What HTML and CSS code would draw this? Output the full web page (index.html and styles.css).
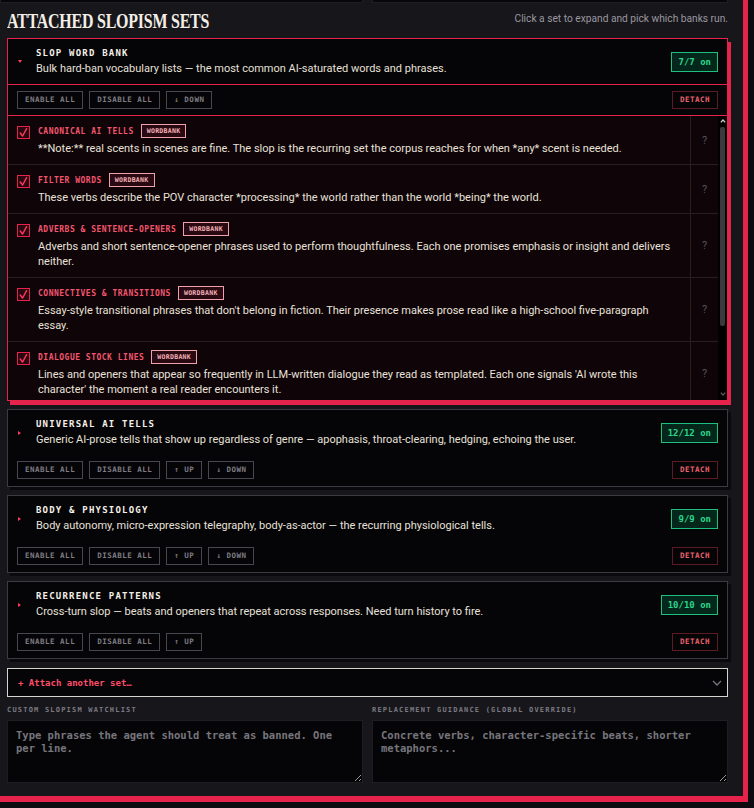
FILE: index.html
```html
<!DOCTYPE html>
<html lang="en">
<head>
<meta charset="utf-8">
<title>Attached Slopism Sets</title>
<link rel="stylesheet" href="styles.css">
</head>
<body>
<section class="panel">
  <div class="prev-fields">
    <div class="prev-box"></div>
    <div class="prev-box"></div>
  </div>

  <header class="section-head">
    <h2 class="section-title">Attached Slopism Sets</h2>
    <p class="section-hint">Click a set to expand and pick which banks run.</p>
  </header>

  <div class="set set-open">
    <div class="set-head">
      <span class="caret caret-down"></span>
      <div class="set-info">
        <div class="set-name">SLOP WORD BANK</div>
        <div class="set-desc">Bulk hard-ban vocabulary lists — the most common AI-saturated words and phrases.</div>
      </div>
      <span class="count">7/7 on</span>
    </div>
    <div class="set-tools">
      <div class="tool-group">
        <button class="tool">ENABLE ALL</button>
        <button class="tool">DISABLE ALL</button>
        <button class="tool">↓ DOWN</button>
      </div>
      <button class="tool detach">DETACH</button>
    </div>
    <div class="banks">
      <div class="bank-list">
        <div class="bank">
          <div class="bank-main">
            <span class="check"><svg viewBox="0 0 13 13" width="13" height="13"><polyline points="3.2,7 5.6,10 9.6,2.6" /></svg></span>
            <div class="bank-body">
              <div class="bank-title"><span class="bank-name">CANONICAL AI TELLS</span><span class="tag">WORDBANK</span></div>
              <div class="bank-desc">**Note:** real scents in scenes are fine. The slop is the recurring set the corpus reaches for when *any* scent is needed.</div>
            </div>
          </div>
          <span class="bank-help">?</span>
        </div>
        <div class="bank">
          <div class="bank-main">
            <span class="check"><svg viewBox="0 0 13 13" width="13" height="13"><polyline points="3.2,7 5.6,10 9.6,2.6" /></svg></span>
            <div class="bank-body">
              <div class="bank-title"><span class="bank-name">FILTER WORDS</span><span class="tag">WORDBANK</span></div>
              <div class="bank-desc">These verbs describe the POV character *processing* the world rather than the world *being* the world.</div>
            </div>
          </div>
          <span class="bank-help">?</span>
        </div>
        <div class="bank">
          <div class="bank-main">
            <span class="check"><svg viewBox="0 0 13 13" width="13" height="13"><polyline points="3.2,7 5.6,10 9.6,2.6" /></svg></span>
            <div class="bank-body">
              <div class="bank-title"><span class="bank-name">ADVERBS &amp; SENTENCE-OPENERS</span><span class="tag">WORDBANK</span></div>
              <div class="bank-desc">Adverbs and short sentence-opener phrases used to perform thoughtfulness. Each one promises emphasis or insight and delivers neither.</div>
            </div>
          </div>
          <span class="bank-help">?</span>
        </div>
        <div class="bank">
          <div class="bank-main">
            <span class="check"><svg viewBox="0 0 13 13" width="13" height="13"><polyline points="3.2,7 5.6,10 9.6,2.6" /></svg></span>
            <div class="bank-body">
              <div class="bank-title"><span class="bank-name">CONNECTIVES &amp; TRANSITIONS</span><span class="tag">WORDBANK</span></div>
              <div class="bank-desc">Essay-style transitional phrases that don't belong in fiction. Their presence makes prose read like a high-school five-paragraph essay.</div>
            </div>
          </div>
          <span class="bank-help">?</span>
        </div>
        <div class="bank">
          <div class="bank-main">
            <span class="check"><svg viewBox="0 0 13 13" width="13" height="13"><polyline points="3.2,7 5.6,10 9.6,2.6" /></svg></span>
            <div class="bank-body">
              <div class="bank-title"><span class="bank-name">DIALOGUE STOCK LINES</span><span class="tag">WORDBANK</span></div>
              <div class="bank-desc">Lines and openers that appear so frequently in LLM-written dialogue they read as templated. Each one signals 'AI wrote this character' the moment a real reader encounters it.</div>
            </div>
          </div>
          <span class="bank-help">?</span>
        </div>
      </div>
      <div class="scroll-track">
        <svg class="scroll-arrow scroll-up" viewBox="0 0 6 4" width="6" height="4"><polyline points="0.8,3.4 3,1 5.2,3.4" /></svg>
        <span class="scroll-thumb"></span>
        <svg class="scroll-arrow scroll-down" viewBox="0 0 6 4" width="6" height="4"><polyline points="0.8,0.6 3,3 5.2,0.6" /></svg>
      </div>
    </div>
  </div>

  <div class="set">
    <div class="set-head">
      <span class="caret caret-right"></span>
      <div class="set-info">
        <div class="set-name">UNIVERSAL AI TELLS</div>
        <div class="set-desc">Generic AI-prose tells that show up regardless of genre — apophasis, throat-clearing, hedging, echoing the user.</div>
      </div>
      <span class="count">12/12 on</span>
    </div>
    <div class="set-tools">
      <div class="tool-group">
        <button class="tool">ENABLE ALL</button>
        <button class="tool">DISABLE ALL</button>
        <button class="tool">↑ UP</button>
        <button class="tool">↓ DOWN</button>
      </div>
      <button class="tool detach">DETACH</button>
    </div>
  </div>

  <div class="set">
    <div class="set-head">
      <span class="caret caret-right"></span>
      <div class="set-info">
        <div class="set-name">BODY &amp; PHYSIOLOGY</div>
        <div class="set-desc">Body autonomy, micro-expression telegraphy, body-as-actor — the recurring physiological tells.</div>
      </div>
      <span class="count">9/9 on</span>
    </div>
    <div class="set-tools">
      <div class="tool-group">
        <button class="tool">ENABLE ALL</button>
        <button class="tool">DISABLE ALL</button>
        <button class="tool">↑ UP</button>
        <button class="tool">↓ DOWN</button>
      </div>
      <button class="tool detach">DETACH</button>
    </div>
  </div>

  <div class="set">
    <div class="set-head">
      <span class="caret caret-right"></span>
      <div class="set-info">
        <div class="set-name">RECURRENCE PATTERNS</div>
        <div class="set-desc">Cross-turn slop — beats and openers that repeat across responses. Need turn history to fire.</div>
      </div>
      <span class="count">10/10 on</span>
    </div>
    <div class="set-tools">
      <div class="tool-group">
        <button class="tool">ENABLE ALL</button>
        <button class="tool">DISABLE ALL</button>
        <button class="tool">↑ UP</button>
      </div>
      <button class="tool detach">DETACH</button>
    </div>
  </div>

  <div class="attach">
    <span class="attach-label">+ Attach another set…</span>
    <svg class="attach-chevron" viewBox="0 0 10 6" width="10" height="6"><polyline points="1,1 5,5 9,1" /></svg>
  </div>

  <div class="fields">
    <label class="field">
      <span class="field-label">CUSTOM SLOPISM WATCHLIST</span>
      <textarea class="field-input" placeholder="Type phrases the agent should treat as banned. One per line."></textarea>
    </label>
    <label class="field">
      <span class="field-label">REPLACEMENT GUIDANCE (GLOBAL OVERRIDE)</span>
      <textarea class="field-input" placeholder="Concrete verbs, character-specific beats, shorter metaphors..."></textarea>
    </label>
  </div>
</section>
</body>
</html>
```

FILE: styles.css
```css
* {
  box-sizing: border-box;
}

html, body {
  margin: 0;
  padding: 0;
}

body {
  background: #0c0b0f;
  font-family: "Roboto", "Inter", "Noto Sans", sans-serif;
  color: #e6e1d9;
}

.panel {
  width: 748px;
  padding: 0 15px 13px 7px;
  background: #17161b;
  border-right: 5px solid #e5234b;
  border-bottom: 6px solid #e5234b;
}

/* tail end of the fields from the section above */
.prev-fields {
  display: grid;
  grid-template-columns: 363px 356px;
  gap: 9px;
  margin-left: -7px;
}

.prev-box {
  height: 3px;
  background: #070709;
  border: 1px solid #1f1e24;
  border-top: none;
}

.section-head {
  display: flex;
  justify-content: space-between;
  align-items: flex-start;
  margin: 5px 0 4px;
}

/* display face is set tight and narrow */
.section-title {
  margin: 0;
  font-family: "Liberation Serif", "DejaVu Serif", serif;
  font-weight: 700;
  font-size: 21px;
  line-height: 26px;
  letter-spacing: -0.3px;
  text-transform: uppercase;
  color: #f3efe6;
  transform: scaleX(0.76);
  transform-origin: left center;
  white-space: nowrap;
}

.section-hint {
  margin: 4px 0 0;
  font-size: 10.2px;
  line-height: 14px;
  color: #9a98a0;
}

/* ---- slopism set cards ---- */
.set {
  background: #050406;
  border: 1px solid #3c3b41;
  box-shadow: 3px 3px 0 #0a090d;
  margin-bottom: 8px;
}

.set-open {
  border-color: #e5234b;
  box-shadow: 3px 4px 0 #e5234b;
}

.set-head {
  display: flex;
  align-items: center;
  padding: 8px 9px 8px 10px;
}

.set-open .set-head {
  border-bottom: 1px solid #e5234b;
}

.caret {
  flex: none;
  width: 0;
  height: 0;
  margin-right: 14px;
}

.caret-down {
  border-left: 2.5px solid transparent;
  border-right: 2.5px solid transparent;
  border-top: 3px solid #ff3a5c;
}

.caret-right {
  border-top: 2.5px solid transparent;
  border-bottom: 2.5px solid transparent;
  border-left: 3px solid #ff3a5c;
  margin-right: 15px;
}

.set-info {
  flex: 1;
  min-width: 0;
}

.set-name {
  font-family: "DejaVu Sans Mono", "Liberation Mono", monospace;
  font-weight: 700;
  font-size: 9px;
  line-height: 12px;
  letter-spacing: 1.2px;
  color: #f4f0e8;
}

.set-desc {
  margin-top: 2px;
  font-size: 11px;
  line-height: 15px;
  color: #e6e1d9;
}

.count {
  flex: none;
  height: 20px;
  padding: 0 6px;
  display: flex;
  align-items: center;
  border: 1px solid #1fbf7f;
  background: #03271a;
  color: #2ed58c;
  font-family: "DejaVu Sans Mono", "Liberation Mono", monospace;
  font-weight: 700;
  font-size: 9px;
}

.set-tools {
  display: flex;
  justify-content: space-between;
  align-items: center;
  padding: 6px 9px 7px 9px;
}

.set-open .set-tools {
  padding-bottom: 6px;
  border-bottom: 1px solid #e5234b;
}

.tool-group {
  display: flex;
  gap: 6px;
}

.tool {
  height: 18px;
  padding: 0 7px;
  margin: 0;
  background: transparent;
  border: 1px solid #48474e;
  color: #7e7c84;
  font-family: "DejaVu Sans Mono", "Liberation Mono", monospace;
  font-weight: 700;
  font-size: 7.5px;
  line-height: 16px;
  letter-spacing: 0.5px;
}

.detach {
  border-color: #5c1a22;
  color: #e8626c;
}

/* ---- bank list inside the open set ---- */
.banks {
  display: flex;
  height: 284px;
  background: #0f0407;
}

.bank-list {
  flex: 1;
  min-width: 0;
  overflow: hidden;
}

.scroll-track {
  flex: none;
  width: 9px;
  background: #000000;
  display: flex;
  flex-direction: column;
  align-items: center;
  padding: 3px 0 4px;
}

.scroll-arrow polyline {
  fill: none;
  stroke-width: 1.2;
}

.scroll-up polyline {
  stroke: #d0d0d0;
}

.scroll-down polyline {
  stroke: #5a5a5c;
}

.scroll-thumb {
  width: 5px;
  height: 199px;
  margin: 4px 0 auto;
  border-radius: 2px;
  background: #3a3a3c;
}

.bank {
  display: flex;
  border-bottom: 1px solid #2b1d21;
}

.bank-main {
  flex: 1;
  display: flex;
  align-items: flex-start;
  gap: 8px;
  padding: 8px 10px 8px 9px;
}

.check {
  flex: none;
  width: 13px;
  height: 13px;
  margin-top: 2px;
  border: 1px solid #e5234b;
  background: #2a0610;
  display: flex;
}

.check svg {
  margin: -1px;
}

.check polyline {
  fill: none;
  stroke: #ff3a5c;
  stroke-width: 1.4;
  stroke-linecap: round;
  stroke-linejoin: round;
}

.bank-body {
  flex: 1;
  min-width: 0;
}

.bank-title {
  display: flex;
  align-items: center;
  gap: 7px;
  height: 14px;
}

.bank-name {
  font-family: "DejaVu Sans Mono", "Liberation Mono", monospace;
  font-weight: 700;
  font-size: 8px;
  letter-spacing: 0.5px;
  color: #f2566e;
}

.tag {
  height: 14px;
  padding: 0 5px;
  display: flex;
  align-items: center;
  border: 1px solid #f0a0aa;
  background: #2a0a12;
  color: #f4b0b8;
  font-family: "DejaVu Sans Mono", "Liberation Mono", monospace;
  font-weight: 700;
  font-size: 6.5px;
  letter-spacing: 0.3px;
}

.bank-desc {
  margin-top: 3px;
  font-size: 11px;
  line-height: 15px;
  color: #e8e2da;
}

.bank-help {
  flex: none;
  width: 28px;
  display: flex;
  align-items: center;
  justify-content: center;
  border-left: 1px solid #2b1d21;
  font-size: 11px;
  color: #57545c;
}

/* ---- attach select ---- */
.attach {
  height: 29px;
  display: flex;
  align-items: center;
  justify-content: space-between;
  padding: 0 5px 0 10px;
  margin-top: 9px;
  margin-bottom: 8px;
  background: #050406;
  border: 1px solid #d6d4ce;
}

.attach-label {
  font-family: "DejaVu Sans Mono", "Liberation Mono", monospace;
  font-weight: 700;
  font-size: 9px;
  color: #ff4d6a;
}

.attach-chevron polyline {
  fill: none;
  stroke: #77757c;
  stroke-width: 1.3;
}

/* ---- free text fields ---- */
.fields {
  display: grid;
  grid-template-columns: 1fr 1fr;
  gap: 9px;
}

.field {
  display: flex;
  flex-direction: column;
}

.field-label {
  font-family: "DejaVu Sans Mono", "Liberation Mono", monospace;
  font-weight: 700;
  font-size: 7px;
  line-height: 10px;
  letter-spacing: 1.2px;
  color: #7c7a82;
  margin-bottom: 5px;
}

.field-input {
  height: 63px;
  margin: 0;
  padding: 8px 8px;
  background: #050507;
  border: 1px solid #1e1d23;
  border-radius: 0;
  font-family: "DejaVu Sans Mono", "Liberation Mono", monospace;
  font-weight: 700;
  font-size: 10.5px;
  line-height: 13.3px;
  color: #d8d4cc;
  resize: vertical;
  color-scheme: dark;
}

.field-input::placeholder {
  color: #77757c;
}
```
